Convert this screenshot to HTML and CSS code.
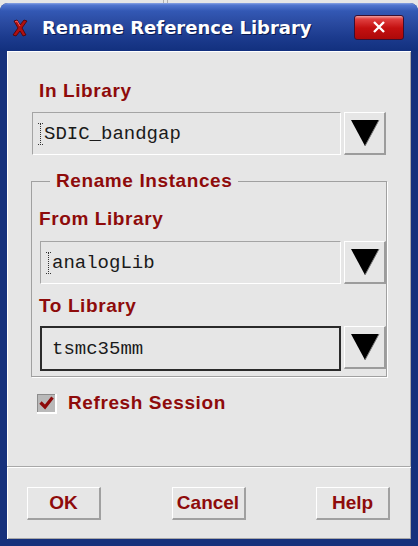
FILE: index.html
```html
<!DOCTYPE html>
<html>
<head>
<meta charset="utf-8">
<link rel="stylesheet" href="styles.css">
</head>
<body>
<div class="desk-mark"></div>
<div class="window">
  <div class="titlebar">
    <svg class="app-icon" width="16" height="18" viewBox="0 0 16 18">
      <path d="M2 2 L5 1 L8 6 L12 1 L15 2 L10 9 L14 16 L11 17 L8 12 L4 17 L1 16 L6 9 Z" fill="#b01010" stroke="#500000" stroke-width="0.8"/>
      <path d="M3 3 L5 2 L8 7" fill="none" stroke="#ff6060" stroke-width="1"/>
    </svg>
    <span class="title">Rename Reference Library</span>
    <div class="close">
      <svg width="14" height="12" viewBox="0 0 14 12"><path d="M2 1 L12 11 M12 1 L2 11" stroke="#fff" stroke-width="2.4"/></svg>
    </div>
  </div>
  <div class="client">
    <div class="content">
      <div class="label">In Library</div>
      <div class="combo combo-top">
        <div class="field"><svg class="caret" width="7" height="24" viewBox="0 0 7 24"><path d="M1 1.5 H6 M1 22.5 H6 M3.5 2 V22" stroke="#333" stroke-width="1" stroke-dasharray="1 1" fill="none"/></svg><span class="value">SDIC_bandgap</span></div>
        <div class="drop"><svg width="30" height="28" viewBox="0 0 30 28"><path d="M1 1 H29 L15 27 Z" fill="#000"/><path d="M29 1 L15 27" stroke="#777" stroke-width="1"/></svg></div>
      </div>
      <fieldset class="group">
        <legend>Rename Instances</legend>
        <div class="label">From Library</div>
        <div class="combo">
          <div class="field"><svg class="caret" width="7" height="24" viewBox="0 0 7 24"><path d="M1 1.5 H6 M1 22.5 H6 M3.5 2 V22" stroke="#333" stroke-width="1" stroke-dasharray="1 1" fill="none"/></svg><span class="value">analogLib</span></div>
          <div class="drop"><svg width="30" height="28" viewBox="0 0 30 28"><path d="M1 1 H29 L15 27 Z" fill="#000"/><path d="M29 1 L15 27" stroke="#777" stroke-width="1"/></svg></div>
        </div>
        <div class="label label-gap">To Library</div>
        <div class="combo combo-focus">
          <div class="field field-focus"><span class="value value-plain">tsmc35mm</span></div>
          <div class="drop"><svg width="30" height="28" viewBox="0 0 30 28"><path d="M1 1 H29 L15 27 Z" fill="#000"/><path d="M29 1 L15 27" stroke="#777" stroke-width="1"/></svg></div>
        </div>
      </fieldset>
      <div class="check-row">
        <svg class="checkbox" width="20" height="20" viewBox="0 0 20 20">
          <rect x="0" y="0" width="20" height="20" fill="#fff"/>
          <rect x="0" y="0" width="18" height="18" fill="#8c8c8c"/>
          <rect x="1" y="1" width="17" height="17" fill="#b9b9b9"/>
          <path d="M3.5 8.5 L8 13 L15.5 3.5" fill="none" stroke="#8e0b0b" stroke-width="3.2" stroke-linejoin="miter"/>
        </svg>
        <span class="check-label">Refresh Session</span>
      </div>
    </div>
    <div class="separator"></div>
    <div class="actions">
      <div class="btn">OK</div>
      <div class="btn">Cancel</div>
      <div class="btn">Help</div>
    </div>
  </div>
</div>
</body>
</html>
```
FILE: styles.css
```css
html, body {
  margin: 0;
  padding: 0;
}
body {
  width: 418px;
  height: 546px;
  overflow: hidden;
  background: #e6e6e6;
  font-family: "Liberation Sans", Arial, sans-serif;
  position: relative;
}
.desk-mark {
  position: absolute;
  left: 163px;
  top: 0;
  width: 3px;
  height: 3px;
  border-left: 1px solid #b0b0b0;
  border-right: 1px solid #b0b0b0;
}
.window {
  margin-top: 3px;
  height: 543px;
  background: #16317c;
  border-radius: 8px 8px 0 0;
  display: flex;
  flex-direction: column;
}
.titlebar {
  height: 48px;
  flex: none;
  border-radius: 8px 8px 0 0;
  background: linear-gradient(#8aa4e4 0px, #5176cf 2px, #3358b4 8px, #2a4aa0 20px, #1c3b8e 34px, #12307e 48px);
  display: flex;
  align-items: center;
  padding-left: 12px;
}
.app-icon {
  flex: none;
  margin-top: 2px;
}
.title {
  margin-left: 14px;
  font-family: "DejaVu Sans", Verdana, sans-serif;
  font-weight: bold;
  font-size: 18px;
  color: #fff;
  text-shadow: 1px 1px 0 #0a1a50;
  white-space: nowrap;
}
.close {
  margin-left: auto;
  margin-right: 14px;
  width: 50px;
  height: 25px;
  box-sizing: border-box;
  border: 1px solid #3a1030;
  border-radius: 3px;
  background: linear-gradient(#f0a0a0 0px, #e04040 3px, #c41010 12px, #a80808 25px);
  display: flex;
  align-items: center;
  justify-content: center;
}
.client {
  flex: 1;
  margin: 0 7px 7px;
  background: #e6e6e6;
  display: flex;
  flex-direction: column;
  box-shadow: inset 1px 1px 0 #ffffff, inset -1px -1px 0 #a8a8a8;
}
.content {
  flex: 1;
  padding-top: 30px;
}
.label {
  margin-left: 32px;
  font-size: 19px;
  line-height: 20px;
  font-weight: bold;
  color: #8e0b0b;
  letter-spacing: 0.6px;
}
.group .label {
  margin-left: 0;
}
.label-gap {
  margin-top: 12px;
}
.combo {
  display: flex;
  gap: 3px;
  height: 43px;
  margin-top: 12px;
}
.combo-top {
  margin-top: 11px;
  margin-left: 25px;
  width: 354px;
}
.field {
  flex: 1;
  box-sizing: border-box;
  border-top: 1px solid #a4a4a4;
  border-left: 1px solid #a4a4a4;
  border-bottom: 1px solid #ffffff;
  border-right: 1px solid #ffffff;
  display: flex;
  align-items: center;
  padding-left: 4px;
}
.field-focus {
  border: 2px solid #2a2a2a;
  padding-left: 10px;
}
.combo-focus {
  margin-top: 10px;
  height: 45px;
}
.combo-focus .drop {
  height: 43px;
}
.caret {
  flex: none;
  margin-top: 1px;
}
.value {
  font-family: "Liberation Mono", "Courier New", monospace;
  font-size: 19px;
  color: #1a1a1a;
  white-space: nowrap;
}
.drop {
  width: 42px;
  height: 43px;
  flex: none;
  box-sizing: border-box;
  border-top: 1px solid #ffffff;
  border-left: 1px solid #ffffff;
  border-bottom: 2px solid #9c9c9c;
  border-right: 2px solid #9c9c9c;
  display: flex;
  align-items: center;
  justify-content: center;
}
.drop svg {
  margin-top: -1px;
}
.group {
  margin: 16px 0 0 24px;
  width: 356px;
  box-sizing: border-box;
  padding: 18px 0 5px 7px;
  border: 1px solid #a0a0a0;
  box-shadow: 1px 1px 0 #ffffff;
}
.group .combo {
  margin-left: 1px;
}
.group legend {
  margin-left: 11px;
  padding: 0 6px;
  font-size: 19px;
  line-height: 20px;
  font-weight: bold;
  color: #8e0b0b;
  letter-spacing: 0.6px;
}
.check-row {
  display: flex;
  align-items: flex-start;
  margin: 16px 0 0 30px;
}
.checkbox {
  flex: none;
  margin-top: 1px;
}
.check-label {
  margin-left: 11px;
  font-size: 19px;
  line-height: 20px;
  font-weight: bold;
  color: #8e0b0b;
  letter-spacing: 0.6px;
}
.separator {
  height: 1px;
  flex: none;
  background: #a8a8a8;
  border-bottom: 1px solid #ffffff;
}
.actions {
  flex: none;
  display: flex;
  justify-content: space-between;
  padding: 19px 21px 19px 20px;
}
.btn {
  width: 74px;
  height: 33px;
  box-sizing: border-box;
  border-top: 1px solid #ffffff;
  border-left: 1px solid #ffffff;
  border-bottom: 2px solid #a0a0a0;
  border-right: 2px solid #a0a0a0;
  display: flex;
  align-items: center;
  justify-content: center;
  font-size: 19px;
  font-weight: bold;
  color: #8e0b0b;
}
```
